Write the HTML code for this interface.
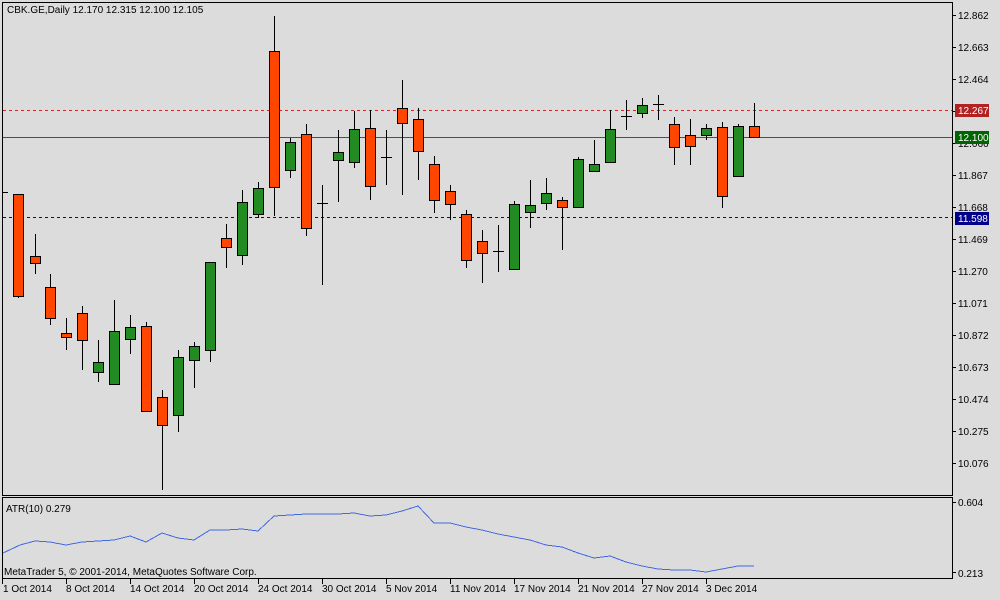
<!DOCTYPE html>
<html><head><meta charset="utf-8"><style>
body{margin:0;width:1000px;height:600px;background:#dcdcdc;overflow:hidden;font-family:"Liberation Sans",sans-serif}
svg{position:absolute;left:0;top:0}
text{font-family:"Liberation Sans",sans-serif;font-size:10px;fill:#000}
</style></head><body>
<svg width="1000" height="600" viewBox="0 0 1000 600" shape-rendering="crispEdges">
<rect x="0" y="0" width="1000" height="600" fill="#dcdcdc"/>
<line x1="3" y1="110.5" x2="952" y2="110.5" stroke="#e02020" stroke-dasharray="3,3"/>
<line x1="3" y1="137.5" x2="952" y2="137.5" stroke="#206a3a"/>
<line x1="3" y1="217.5" x2="952" y2="217.5" stroke="#0000d0" stroke-dasharray="3,3"/>
<g stroke="#000" stroke-width="1">
<path d="M18.5 194V298M35.5 234V274M50.5 274V325M66.5 318V350M82.5 306V370M98.5 340V382M114.5 300V385M130.5 315V354M146.5 322V412M162.5 390V490M178.5 350V432M194.5 342V388M210.5 262V362M226.5 224V268M242.5 190V265M258.5 182V218M274.5 16V216M290.5 138V178M306.5 124V236M322.5 185V285M338.5 130V202M354.5 111V168M370.5 110V200M386.5 130V185M402.5 80V195M418.5 108V180M434.5 156V213M450.5 185V220M466.5 210V268M482.5 230V283M498.5 225V272M514.5 201V270M530.5 180V228M546.5 178V210M562.5 197V250M578.5 157V208M594.5 140V172M610.5 110V163M626.5 100V130M642.5 98V118M658.5 95V120M674.5 117V165M690.5 119V165M706.5 124V140M722.5 122V208M738.5 124V177M754.5 103V137"/>
<path d="M317 203.5H328M381 157.5H392M493 251.5H504M621 116.5H632M653 104.5H664M3 192.5H8"/>
</g>
<g stroke="#000" fill="#ff4500">
<rect x="13.5" y="194.5" width="10" height="102"/>
<rect x="30.5" y="256.5" width="10" height="7"/>
<rect x="45.5" y="287.5" width="10" height="31"/>
<rect x="61.5" y="333.5" width="10" height="4"/>
<rect x="77.5" y="313.5" width="10" height="27"/>
<rect x="141.5" y="326.5" width="10" height="85"/>
<rect x="157.5" y="397.5" width="10" height="28"/>
<rect x="221.5" y="238.5" width="10" height="9"/>
<rect x="269.5" y="51.5" width="10" height="136"/>
<rect x="301.5" y="134.5" width="10" height="94"/>
<rect x="365.5" y="128.5" width="10" height="58"/>
<rect x="397.5" y="108.5" width="10" height="15"/>
<rect x="413.5" y="119.5" width="10" height="32"/>
<rect x="429.5" y="164.5" width="10" height="36"/>
<rect x="445.5" y="191.5" width="10" height="13"/>
<rect x="461.5" y="214.5" width="10" height="46"/>
<rect x="477.5" y="241.5" width="10" height="12"/>
<rect x="557.5" y="200.5" width="10" height="7"/>
<rect x="669.5" y="124.5" width="10" height="23"/>
<rect x="685.5" y="135.5" width="10" height="11"/>
<rect x="717.5" y="127.5" width="10" height="69"/>
<rect x="749.5" y="126.5" width="10" height="11"/>
</g>
<g stroke="#000" fill="#228b22">
<rect x="93.5" y="362.5" width="10" height="10"/>
<rect x="109.5" y="331.5" width="10" height="53"/>
<rect x="125.5" y="327.5" width="10" height="12"/>
<rect x="173.5" y="357.5" width="10" height="58"/>
<rect x="189.5" y="346.5" width="10" height="14"/>
<rect x="205.5" y="262.5" width="10" height="88"/>
<rect x="237.5" y="202.5" width="10" height="53"/>
<rect x="253.5" y="188.5" width="10" height="26"/>
<rect x="285.5" y="142.5" width="10" height="28"/>
<rect x="333.5" y="152.5" width="10" height="8"/>
<rect x="349.5" y="129.5" width="10" height="33"/>
<rect x="509.5" y="204.5" width="10" height="65"/>
<rect x="525.5" y="205.5" width="10" height="7"/>
<rect x="541.5" y="193.5" width="10" height="10"/>
<rect x="573.5" y="159.5" width="10" height="48"/>
<rect x="589.5" y="164.5" width="10" height="7"/>
<rect x="605.5" y="129.5" width="10" height="33"/>
<rect x="637.5" y="105.5" width="10" height="8"/>
<rect x="701.5" y="128.5" width="10" height="7"/>
<rect x="733.5" y="126.5" width="10" height="50"/>
</g>
<rect x="2.5" y="2.5" width="950" height="493" fill="none" stroke="#000"/>
<rect x="2.5" y="497.5" width="950" height="81" fill="none" stroke="#000"/>
<path stroke="#000" d="M952 15.5H956M952 47.5H956M952 79.5H956M952 111.5H956M952 143.5H956M952 175.5H956M952 207.5H956M952 239.5H956M952 271.5H956M952 303.5H956M952 335.5H956M952 367.5H956M952 399.5H956M952 431.5H956M952 463.5H956M952 502.5H956M952 572.5H956"/>
<path stroke="#000" d="M2.5 579V584M66.5 579V584M130.5 579V584M194.5 579V584M258.5 579V584M322.5 579V584M386.5 579V584M450.5 579V584M514.5 579V584M578.5 579V584M642.5 579V584M706.5 579V584"/>
<polyline fill="none" stroke="#4169e1" points="3,553 20,545 35,541 50,542 66,545 82,542 98,541 114,540 130,536 146,542 162,533 178,538 194,540 210,530 226,530 242,529 258,531 274,516 290,515 306,514 322,514 338,514 354,513 370,516 386,515 402,511 418,506 434,523 450,523 466,527 482,530 498,534 514,537 530,540 546,545 562,547 578,553 594,558 610,556 626,562 642,566 658,569 674,570 690,570 706,572 722,569 738,566 754,566"/>
<g>
<text x="7" y="13" font-size="10.5">CBK.GE,Daily  12.170 12.315 12.100 12.105</text>
<text x="958" y="19">12.862</text>
<text x="958" y="51">12.663</text>
<text x="958" y="83">12.464</text>
<text x="958" y="147">12.066</text>
<text x="958" y="179">11.867</text>
<text x="958" y="211">11.668</text>
<text x="958" y="243">11.469</text>
<text x="958" y="275">11.270</text>
<text x="958" y="307">11.071</text>
<text x="958" y="339">10.872</text>
<text x="958" y="371">10.673</text>
<text x="958" y="403">10.474</text>
<text x="958" y="435">10.275</text>
<text x="958" y="467">10.076</text>
<text x="958" y="506">0.604</text>
<text x="958" y="577">0.213</text>
<text x="6" y="512">ATR(10) 0.279</text>
<text x="4" y="575">MetaTrader 5, © 2001-2014, MetaQuotes Software Corp.</text>
</g>
<rect x="955" y="104" width="34" height="13" fill="#b22222"/>
<text x="958" y="114" style="fill:#fff">12.267</text>
<rect x="955" y="131" width="34" height="13" fill="#006400"/>
<text x="958" y="141" style="fill:#fff">12.100</text>
<rect x="955" y="212" width="34" height="13" fill="#00008b"/>
<text x="958" y="222" style="fill:#fff">11.598</text>
<g>
<text x="3" y="592">1 Oct 2014</text>
<text x="66" y="592">8 Oct 2014</text>
<text x="130" y="592">14 Oct 2014</text>
<text x="194" y="592">20 Oct 2014</text>
<text x="258" y="592">24 Oct 2014</text>
<text x="322" y="592">30 Oct 2014</text>
<text x="386" y="592">5 Nov 2014</text>
<text x="450" y="592">11 Nov 2014</text>
<text x="514" y="592">17 Nov 2014</text>
<text x="578" y="592">21 Nov 2014</text>
<text x="642" y="592">27 Nov 2014</text>
<text x="706" y="592">3 Dec 2014</text>
</g>
</svg>
</body></html>
